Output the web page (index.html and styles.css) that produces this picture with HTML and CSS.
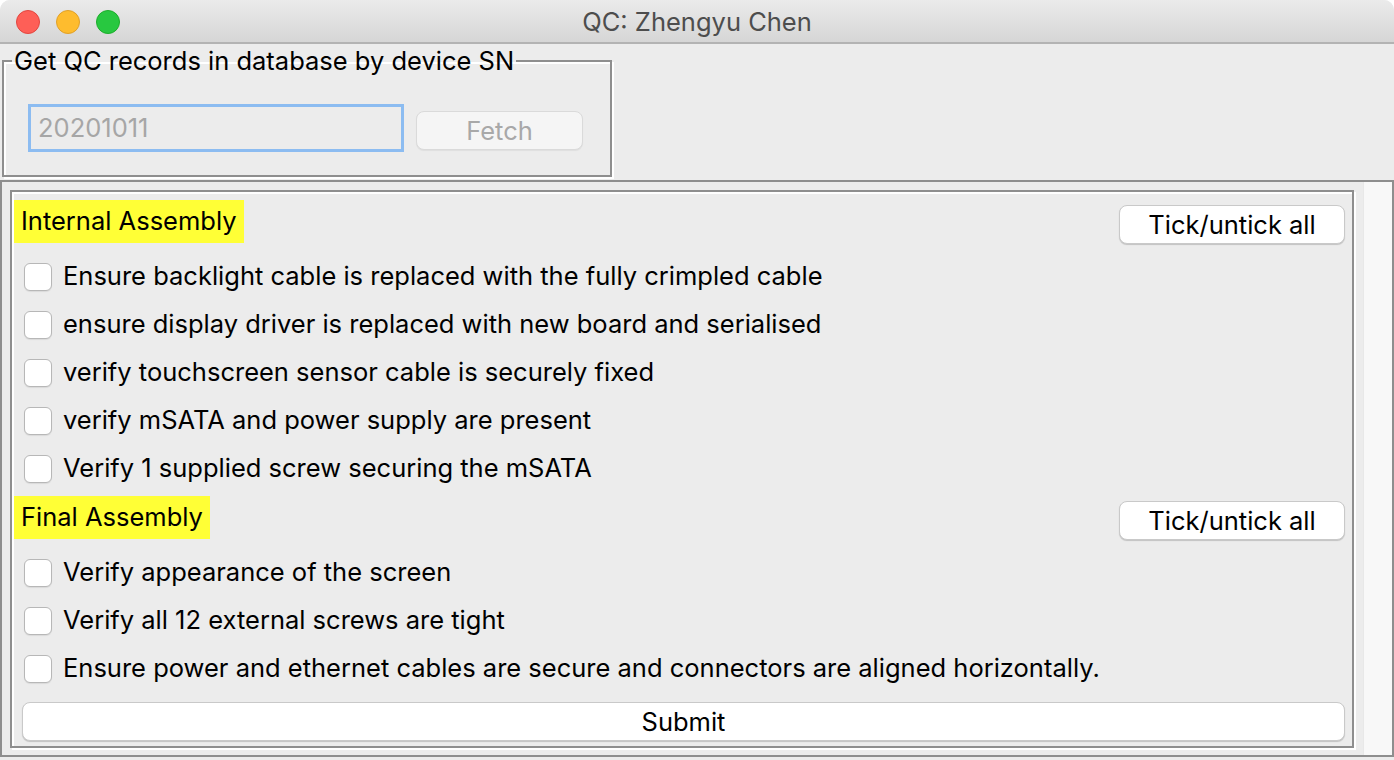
FILE: index.html
```html
<!DOCTYPE html>
<html>
<head>
<meta charset="utf-8">
<link rel="stylesheet" href="styles.css">
</head>
<body>
<div class="window">
  <div class="titlebar">
    <div class="lights">
      <span class="light red"></span>
      <span class="light yellow"></span>
      <span class="light green"></span>
    </div>
    <div class="title">QC: Zhengyu Chen</div>
  </div>
  <div class="body">
    <fieldset class="group">
      <legend>Get QC records in database by device SN</legend>
      <div class="search">
        <div class="entry">20201011</div>
        <div class="btn disabled fetch">Fetch</div>
      </div>
    </fieldset>
    <div class="outer">
      <div class="canvas">
        <div class="inner">
          <div class="header first">
            <span class="hl">Internal Assembly</span>
            <div class="btn tick">Tick/untick all</div>
          </div>
          <div class="row"><span class="cb"></span><span class="label">Ensure backlight cable is replaced with the fully crimpled cable</span></div>
          <div class="row"><span class="cb"></span><span class="label">ensure display driver is replaced with new board and serialised</span></div>
          <div class="row"><span class="cb"></span><span class="label">verify touchscreen sensor cable is securely fixed</span></div>
          <div class="row"><span class="cb"></span><span class="label">verify mSATA and power supply are present</span></div>
          <div class="row"><span class="cb"></span><span class="label">Verify 1 supplied screw securing the mSATA</span></div>
          <div class="header second">
            <span class="hl">Final Assembly</span>
            <div class="btn tick">Tick/untick all</div>
          </div>
          <div class="row"><span class="cb"></span><span class="label">Verify appearance of the screen</span></div>
          <div class="row"><span class="cb"></span><span class="label">Verify all 12 external screws are tight</span></div>
          <div class="row"><span class="cb"></span><span class="label">Ensure power and ethernet cables are secure and connectors are aligned horizontally.</span></div>
          <div class="btn submit">Submit</div>
        </div>
      </div>
      <div class="scroll"></div>
    </div>
  </div>
</div>
</body>
</html>
```

FILE: styles.css
```css
* { box-sizing: border-box; }
html, body {
  margin: 0;
  padding: 0;
  background: #ffffff;
}
body {
  width: 1394px;
  height: 760px;
  overflow: hidden;
  font-family: Inter, "Liberation Sans", sans-serif;
  font-size: 25.5px;
  color: #000;
}
.window {
  width: 1394px;
  height: 760px;
  background: #ececec;
  border-radius: 10px 10px 0 0;
  overflow: hidden;
  display: flex;
  flex-direction: column;
}
.titlebar {
  height: 44px;
  flex: none;
  background: linear-gradient(#ebebeb, #d6d6d6);
  border-bottom: 2px solid #b3b3b3;
  display: flex;
  align-items: center;
  position: relative;
}
.lights {
  display: flex;
  gap: 16px;
  padding-left: 16px;
  position: absolute;
  left: 0;
  top: 10px;
}
.light {
  width: 24px;
  height: 24px;
  border-radius: 50%;
  display: block;
}
.red { background: #fe5f57; border: 1px solid #e2463f; }
.yellow { background: #febc2e; border: 1px solid #e0a028; }
.green { background: #28c840; border: 1px solid #1dad2b; }
.title {
  flex: 1;
  text-align: center;
  color: #4d4d4d;
  font-size: 25.5px;
}
.body {
  flex: 1;
  display: flex;
  flex-direction: column;
}
.group {
  margin: 2px 0 0 2px;
  padding: 0;
  width: 610px;
  height: 131px;
  flex: none;
  border: 2px solid #8e8e8e;
  box-shadow: inset 2px 2px 0 #fff, 2px 2px 0 #fff;
}
.group legend {
  padding: 0 2px;
  margin-left: 8px;
  line-height: 30px;
  font-size: 25.5px;
}
.search {
  display: flex;
  align-items: center;
  padding: 28px 0 0 24px;
  gap: 12px;
}
.entry {
  width: 376px;
  height: 48px;
  border: 3px solid #8cbcf1;
  background: #ececec;
  color: #a6a6a6;
  padding-left: 7px;
  line-height: 42px;
}
.btn {
  background: #fff;
  border: 1px solid #c9c9c9;
  border-radius: 8px;
  box-shadow: 0 1px 1px rgba(0,0,0,0.18);
  text-align: center;
  height: 39px;
  line-height: 37px;
}
.btn.disabled {
  background: #f5f5f5;
  border-color: #dadada;
  box-shadow: 0 1px 1px rgba(0,0,0,0.06);
  color: #a8a8a8;
}
.fetch {
  width: 167px;
  margin-top: 4px;
}
.outer {
  margin: 3px 0 3px 0;
  flex: 1;
  border: 2px solid #8e8e8e;
  display: flex;
}
.canvas {
  width: 1361px;
  padding: 8px 0 0 8px;
}
.inner {
  width: 1344px;
  height: 558px;
  border: 2px solid #8e8e8e;
  box-shadow: inset 2px 2px 0 #fff, 2px 2px 0 #fff;
  padding: 2px 7px 0 2px;
  display: flex;
  flex-direction: column;
}
.header {
  display: flex;
  justify-content: space-between;
  align-items: flex-start;
  height: 44px;
  margin-bottom: 9px;
  flex: none;
}
.header.first { margin-top: 6px; }
.header.second { margin-top: 3px; }
.hl {
  background: #ffff36;
  height: 43px;
  line-height: 42px;
  padding: 0 7px;
}
.tick {
  width: 226px;
  margin-top: 5px;
}
.row {
  height: 48px;
  flex: none;
  display: flex;
  align-items: center;
  padding-left: 10px;
  gap: 11px;
}
.label {
  line-height: 30px;
  padding-bottom: 2px;
}
.cb {
  width: 28px;
  height: 28px;
  flex: none;
  background: #fff;
  border: 1px solid #b7b7b7;
  border-radius: 6px;
  box-shadow: 0 1px 1px rgba(0,0,0,0.08);
}
.submit {
  margin: 9px 0 0 8px;
  flex: none;
}
.scroll {
  flex: 1;
  background: #f8f8f8;
  border-left: 1px solid #e8e8e8;
}
```
